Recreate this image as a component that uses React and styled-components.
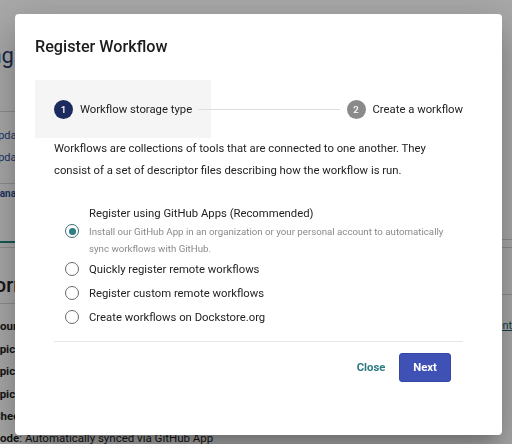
import React from "react";
import styled, { createGlobalStyle } from "styled-components";

const GlobalStyle = createGlobalStyle`
  html, body {
    margin: 0;
    padding: 0;
  }
  body {
    font-family: Roboto, "Liberation Sans", Arial, sans-serif;
    background: #fff;
    color: #212121;
  }
  * {
    box-sizing: border-box;
  }
`;

/* ---------- page behind the dialog ---------- */

const Page = styled.div`
  width: 512px;
  height: 444px;
  overflow: hidden;
  display: grid;
  grid-template-columns: 15px 1fr 10px;
  grid-template-rows: 428px 1fr;
`;

const Strip = styled.div`
  display: flex;
  flex-direction: column;
  white-space: nowrap;
  overflow: hidden;
`;

const Header = styled.div`
  height: 113px;
  display: flex;
  align-items: center;
  border-bottom: 1px solid #d6d6d6;
  font-size: 22px;
  color: #1f3a6b;
`;

const Frag = styled.div`
  text-indent: ${({ cut }) => -cut}px;
`;

const Updates = styled.div`
  padding: 13px 0 14px;
  border-bottom: 1px solid #d6d6d6;
`;

const LinkRow = styled(Frag)`
  font-size: 11px;
  line-height: 22px;
  color: #2d4f96;
`;

const Tabs = styled.div`
  height: 59px;
  border-bottom: 2px solid #1f8a7e;
  padding-top: 2px;
`;

const TabLabel = styled(Frag)`
  font-size: 10px;
  font-weight: 700;
  line-height: 16px;
  color: #2d4f96;
`;

const Section = styled.div`
  margin-top: 4px;
  height: 57px;
  border-top: 1px solid #d6d6d6;
  border-bottom: 1px solid #d6d6d6;
  display: flex;
  align-items: center;
  padding-top: 18px;
  font-size: 20px;
  font-weight: 500;
  color: #222;
`;

const Fields = styled.div`
  padding-top: 11px;
`;

const FieldRow = styled(Frag)`
  font-size: 11.5px;
  font-weight: 700;
  line-height: 22.6px;
  color: #222;
`;

const ModeRow = styled(Frag)`
  grid-column: 1 / -1;
  font-size: 11.5px;
  line-height: 20px;
  white-space: nowrap;
  color: #222;
  b {
    font-weight: 700;
  }
`;

const SideBlock = styled.div`
  height: ${({ h }) => h}px;
  border-bottom: 1px solid #d6d6d6;
`;

const SideLink = styled(Frag)`
  margin-top: 24px;
  font-size: 11px;
  color: #1f5f6a;
  text-decoration: underline;
`;

/* ---------- dialog ---------- */

const Overlay = styled.div`
  position: fixed;
  inset: 0;
  background: rgba(0, 0, 0, 0.34);
  display: flex;
  align-items: flex-start;
  padding: 14px 0 0 15px;
`;

const Dialog = styled.div`
  width: 487px;
  height: 421px;
  background: #fff;
  border-radius: 4px;
  box-shadow: 0 11px 15px -7px rgba(0, 0, 0, 0.2),
    0 24px 38px 3px rgba(0, 0, 0, 0.14), 0 9px 46px 8px rgba(0, 0, 0, 0.12);
  padding: 0 20px;
  display: flex;
  flex-direction: column;
`;

const Title = styled.h2`
  margin: 0;
  padding-top: 19.5px;
  font-size: 16.2px;
  font-weight: 500;
  line-height: 26px;
  color: #1c1c1c;
`;

const Stepper = styled.div`
  margin-top: 20.5px;
  height: 58px;
  display: flex;
  align-items: center;
`;

const Step = styled.div`
  height: 100%;
  display: flex;
  align-items: center;
  gap: 7px;
  padding: 0 19px;
  background: ${({ active }) => (active ? "#f5f5f5" : "transparent")};
`;

const StepIcon = styled.span`
  width: 19px;
  height: 19px;
  border-radius: 50%;
  display: grid;
  place-items: center;
  background: ${({ active }) => (active ? "#1b2b5e" : "#8a8a8a")};
  color: #fff;
  font-size: 9.7px;
  font-weight: 500;
`;

const StepLabel = styled.span`
  font-size: 11.3px;
  color: #212121;
`;

const Connector = styled.div`
  flex: 1;
  height: 1px;
  background: #dedede;
  margin: 0 -12px 0 -13px;
`;

const Body = styled.div`
  padding: 0 19px;
  display: flex;
  flex-direction: column;
`;

const Intro = styled.p`
  margin: 0;
  font-size: 11.3px;
  line-height: 22px;
  color: #222;
`;

const Options = styled.div`
  margin-top: 23px;
  display: flex;
  flex-direction: column;
`;

const Option = styled.label`
  min-height: 24px;
  display: flex;
  align-items: center;
  gap: 10px;
  padding-left: 11px;
  cursor: pointer;
`;

const Radio = styled.span`
  flex: none;
  width: 14px;
  height: 14px;
  border-radius: 50%;
  border: 1.5px solid ${({ checked }) => (checked ? "#3d6e77" : "#6a6a6a")};
  display: grid;
  place-items: center;
  &::after {
    content: "";
    width: 7px;
    height: 7px;
    border-radius: 50%;
    background: ${({ checked }) => (checked ? "#2b7d86" : "transparent")};
  }
`;

const OptionText = styled.div`
  display: flex;
  flex-direction: column;
`;

const OptionLabel = styled.span`
  font-size: 11.3px;
  line-height: 17px;
  color: #222;
`;

const Caption = styled.span`
  margin-top: 2px;
  font-size: 9.7px;
  line-height: 16.5px;
  color: #8a8a8a;
`;

const Divider = styled.div`
  margin-top: 12px;
  height: 1px;
  background: #e6e6e6;
`;

const Actions = styled.div`
  margin-top: 11px;
  padding-right: 12px;
  display: flex;
  justify-content: flex-end;
  gap: 2px;
`;

const Button = styled.button`
  width: 52px;
  height: 29px;
  border-radius: 3px;
  font-family: inherit;
  font-size: 11.3px;
  font-weight: 700;
  cursor: pointer;
  border: 1px solid ${({ primary }) => (primary ? "#3546a3" : "transparent")};
  background: ${({ primary }) => (primary ? "#3f51b5" : "transparent")};
  color: ${({ primary }) => (primary ? "#fff" : "#2b7a81")};
`;

const options = [
  {
    label: "Register using GitHub Apps (Recommended)",
    caption:
      "Install our GitHub App in an organization or your personal account to automatically sync workflows with GitHub.",
  },
  { label: "Quickly register remote workflows" },
  { label: "Register custom remote workflows" },
  { label: "Create workflows on Dockstore.org" },
];

const App = () => {
  const selected = 0;

  return (
    <>
      <GlobalStyle />
      <Page>
        <Strip>
          <Header>
            <Frag cut={55}>Settings</Frag>
          </Header>
          <Updates>
            <LinkRow cut={9}>Update tool</LinkRow>
            <LinkRow cut={9}>Update workflow</LinkRow>
          </Updates>
          <Tabs>
            <TabLabel cut={9}>Manage</TabLabel>
          </Tabs>
          <Section>
            <Frag cut={29}>Information</Frag>
          </Section>
          <Fields>
            <FieldRow cut={7}>Source</FieldRow>
            <FieldRow cut={13}>Topic</FieldRow>
            <FieldRow cut={13}>Topic</FieldRow>
            <FieldRow cut={13}>Topic</FieldRow>
            <FieldRow cut={7}>Checksum</FieldRow>
          </Fields>
        </Strip>
        <div />
        <Strip>
          <SideBlock h={240} />
          <SideBlock h={8} />
          <SideBlock h={47} />
          <SideLink cut={15}>ment-tools</SideLink>
        </Strip>
        <ModeRow cut={10}>
          <b>Mode</b>: Automatically synced via GitHub App
        </ModeRow>
      </Page>

      <Overlay>
        <Dialog>
          <Title>Register Workflow</Title>
          <Stepper>
            <Step active>
              <StepIcon active>1</StepIcon>
              <StepLabel>Workflow storage type</StepLabel>
            </Step>
            <Connector />
            <Step>
              <StepIcon>2</StepIcon>
              <StepLabel>Create a workflow</StepLabel>
            </Step>
          </Stepper>
          <Body>
            <Intro>
              Workflows are collections of tools that are connected to one
              another. They consist of a set of descriptor files describing how
              the workflow is run.
            </Intro>
            <Options>
              {options.map((opt, i) => (
                <Option key={opt.label}>
                  <Radio checked={i === selected} />
                  <OptionText>
                    <OptionLabel>{opt.label}</OptionLabel>
                    {opt.caption && <Caption>{opt.caption}</Caption>}
                  </OptionText>
                </Option>
              ))}
            </Options>
            <Divider />
            <Actions>
              <Button>Close</Button>
              <Button primary>Next</Button>
            </Actions>
          </Body>
        </Dialog>
      </Overlay>
    </>
  );
};

export default App;
